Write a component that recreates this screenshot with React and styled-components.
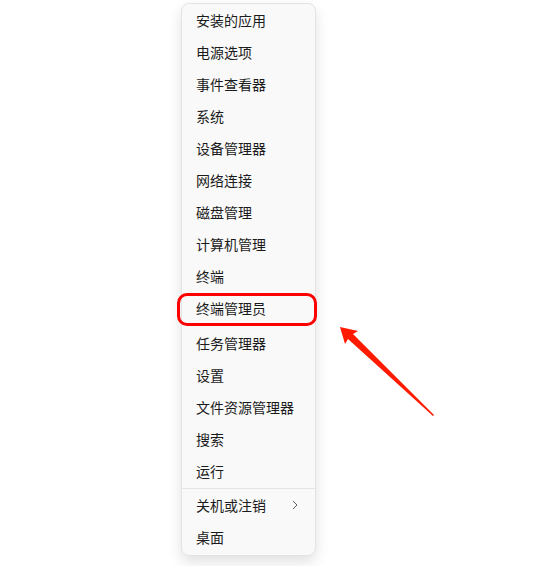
import React from 'react';
import styled, { createGlobalStyle } from 'styled-components';

const GlobalStyle = createGlobalStyle`
  html, body {
    margin: 0;
    padding: 0;
    background: #ffffff;
  }
  body {
    font-family: "Noto Sans CJK SC", "Noto Sans", sans-serif;
  }
`;

const items = [
  '安装的应用',
  '电源选项',
  '事件查看器',
  '系统',
  '设备管理器',
  '网络连接',
  '磁盘管理',
  '计算机管理',
  '终端',
  { label: '终端管理员', marked: true },
  '任务管理器',
  '设置',
  '文件资源管理器',
  '搜索',
  '运行',
  'sep',
  { label: '关机或注销', sub: true },
  '桌面',
];

export default function App() {
  return (
    <>
      <GlobalStyle />
      <Page>
        <Menu>
          {items.map((it, i) => {
            if (it === 'sep') return <Separator key={i} />;
            const item = typeof it === 'string' ? { label: it } : it;
            return (
              <Item key={i} marked={item.marked}>
                <Label>{item.label}</Label>
                {item.sub && (
                  <Chevron viewBox="0 0 6 10">
                    <path d="M1 1 L5 5 L1 9" />
                  </Chevron>
                )}
                {item.marked && <Highlight />}
              </Item>
            );
          })}
        </Menu>
        <Arrow viewBox="0 0 94 89">
          <path d="M0 0 L18 4 L13 7 L94 88 L93 89 L8 12 L5 17 Z" />
        </Arrow>
      </Page>
    </>
  );
}

const Page = styled.div`
  position: relative;
  width: 557px;
  height: 566px;
  padding: 3px 0 0 181px;
  box-sizing: border-box;
`;

const Menu = styled.div`
  width: 135px;
  box-sizing: border-box;
  background: #f9f9f9;
  border: 1px solid #e3e3e3;
  border-radius: 8px;
  box-shadow: 0 6px 14px rgba(0, 0, 0, 0.12);
  padding: 0 0 2px;
  display: flex;
  flex-direction: column;
`;

const Item = styled.div`
  position: relative;
  height: 32px;
  display: flex;
  align-items: center;
  justify-content: space-between;
  padding: 0 17px 0 14px;
  margin-bottom: ${(p) => (p.marked ? '3px' : '0')};
`;

const Label = styled.span`
  font-size: 14px;
  color: #1b1b1b;
  letter-spacing: 0;
  line-height: 1;
`;

const Chevron = styled.svg`
  width: 6px;
  height: 10px;
  fill: none;
  stroke: #5f5f5f;
  stroke-width: 1;
`;

const Separator = styled.div`
  height: 1px;
  background: #e5e5e5;
  margin: 1px 0 0;
`;

const Highlight = styled.div`
  position: absolute;
  top: 1px;
  bottom: -2px;
  left: -5px;
  right: -2px;
  border: 3px solid #ff0000;
  border-radius: 10px;
`;

const Arrow = styled.svg`
  position: absolute;
  left: 340px;
  top: 327px;
  width: 94px;
  height: 89px;
  fill: #ff1a00;
`;
